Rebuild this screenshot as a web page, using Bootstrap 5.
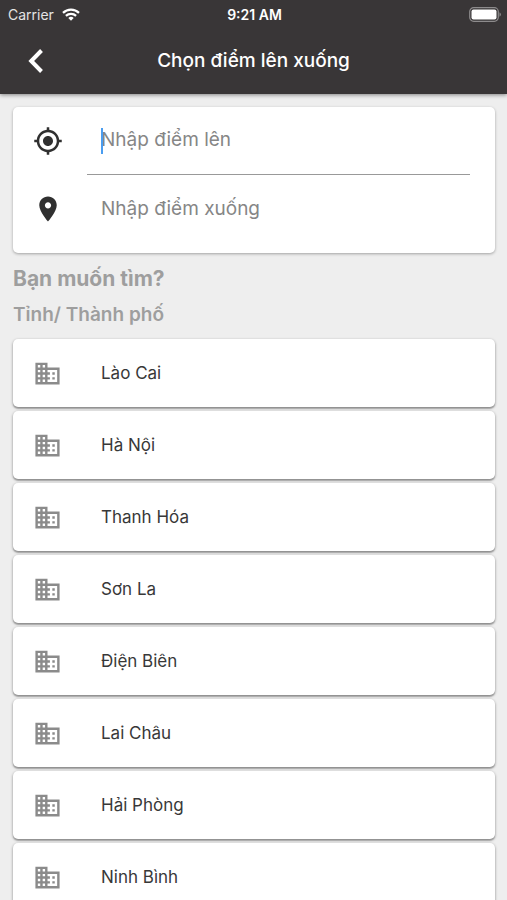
<!DOCTYPE html>
<html lang="vi">
<head>
<meta charset="utf-8">
<meta name="viewport" content="width=device-width, initial-scale=1">
<title>Chọn điểm lên xuống</title>
<link href="https://cdn.jsdelivr.net/npm/bootstrap@5.3.0/dist/css/bootstrap.min.css" rel="stylesheet">
<style>
body { font-family: Inter, "Liberation Sans", sans-serif; background: #eeeeee; color: #383838; }
.top-bar { background: #393637; box-shadow: 0 1px 4px rgba(0,0,0,.45); z-index: 1; }
.status-row { height: 28px; font-size: 14px; padding: 0 6px 0 8px; }
.status-row > * { flex: 1 1 0; }
.carrier { color: #e4e4e4; }
.clock { font-weight: 600; }
.title-row { height: 66px; padding: 0 16px; }
.title-row > .side { width: 40px; }
.page-title { font-size: 19px; font-weight: 500; }
.back-btn { width: 40px; height: 48px; }
.scroll-area { padding: 13px 12px 0 13px; scrollbar-width: none; }
.scroll-area::-webkit-scrollbar { display: none; }
.panel { border-radius: 5px; box-shadow: 0 1px 3px rgba(0,0,0,.32); }
.search-panel { height: 146px; padding: 0 25px 10px 0; }
.icon-col { width: 74px; padding-left: 20px; }
.field-col { padding-left: 14px; }
.field-col.first { border-bottom: 1px solid #999; }
.search-panel .form-control { font-size: 19px; background: transparent; box-shadow: none; color: #383838; }
.search-panel .form-control::placeholder { color: #868686; opacity: 1; }
.caret-bar { width: 2px; height: 26px; left: 14px; background: #4a9df0; }
.ask { font-size: 21px; font-weight: 700; line-height: 32px; margin: 10px 0 0; }
.group-name { font-size: 19px; font-weight: 600; line-height: 32px; margin: 4px 0 8px; }
.muted-head { color: #9e9e9e; }
.place { height: 68px; margin-bottom: 4px; font-size: 17px; color: #383838; box-shadow: 0 1px 3px rgba(0,0,0,.4), 0 2px 1px rgba(0,0,0,.16); }
.place .field-col { padding-top: 2px; }
.place svg { fill: #8b8b8b; }
</style>
<script src="https://cdn.jsdelivr.net/npm/bootstrap@5.3.0/dist/js/bootstrap.bundle.min.js"></script>
</head>
<body>
<svg class="d-none" aria-hidden="true">
  <symbol id="city" viewBox="0 0 24 24"><path d="M12 7V3H2v18h20V7H12zM6 19H4v-2h2v2zm0-4H4v-2h2v2zm0-4H4V9h2v2zm0-4H4V5h2v2zm4 12H8v-2h2v2zm0-4H8v-2h2v2zm0-4H8V9h2v2zm0-4H8V5h2v2zm10 12h-8v-2h2v-2h-2v-2h2v-2h-2V9h8v10zm-2-8h-2v2h2v-2zm0 4h-2v2h2v-2z"/></symbol>
</svg>
<div class="d-flex flex-column vh-100">
  <header class="top-bar text-white flex-shrink-0">
    <div class="status-row d-flex align-items-center">
      <div class="d-flex align-items-center gap-2">
        <span class="carrier">Carrier</span>
        <svg width="18" height="13" viewBox="0 0 18 13" fill="none" stroke="#fff" stroke-width="2.200" aria-hidden="true"><path d="M1 4.900a11.500 11.500 0 0 1 16 0M3.900 7.900a7.300 7.300 0 0 1 10.200 0"/><path d="M9 12.700 6.300 10a3.900 3.900 0 0 1 5.400 0z" fill="#fff" stroke="none"/></svg>
      </div>
      <div class="clock text-center">9:21 AM</div>
      <div class="d-flex justify-content-end">
        <svg width="32" height="15" viewBox="0 0 32 15" aria-hidden="true"><rect x=".7" y=".7" width="28.600" height="13.600" rx="4" fill="none" stroke="#8d8b8c" stroke-width="1.200"/><rect x="2.500" y="2.500" width="25" height="10" rx="2" fill="#fff"/><path d="M30.500 5.200q1.400.8 1.400 2.300t-1.400 2.300z" fill="#8d8b8c"/></svg>
      </div>
    </div>
    <div class="title-row d-flex align-items-center justify-content-between">
      <button type="button" class="back-btn btn p-0 border-0 d-flex align-items-center justify-content-center" aria-label="Quay lại">
        <svg width="16" height="26" viewBox="0 0 16 26" fill="none" stroke="#fff" stroke-width="4" aria-hidden="true"><path d="M13.500 2.500 3.200 13l10.300 10.500"/></svg>
      </button>
      <h1 class="page-title m-0">Chọn điểm lên xuống</h1>
      <div class="side"></div>
    </div>
  </header>

  <main class="scroll-area flex-grow-1 overflow-auto">
    <form class="panel search-panel bg-white d-flex flex-column">
      <div class="d-flex flex-fill">
        <label for="from" class="icon-col d-flex align-items-center" aria-label="Điểm lên">
          <svg width="30" height="30" viewBox="0 0 24 24" fill="#303030" aria-hidden="true"><path d="M12 8c-2.210 0-4 1.790-4 4s1.790 4 4 4 4-1.790 4-4-1.790-4-4-4zm8.940 3c-.46-4.170-3.770-7.480-7.940-7.940V1h-2v2.060C6.830 3.520 3.520 6.830 3.060 11H1v2h2.060c.46 4.170 3.770 7.480 7.940 7.940V23h2v-2.060c4.170-.46 7.480-3.770 7.940-7.940H23v-2h-2.060zM12 19c-3.870 0-7-3.130-7-7s3.130-7 7-7 7 3.130 7 7-3.130 7-7 7z"/></svg>
        </label>
        <div class="field-col first flex-fill position-relative d-flex align-items-center">
          <input id="from" type="text" class="form-control border-0 p-0" placeholder="Nhập điểm lên">
          <span class="caret-bar position-absolute"></span>
        </div>
      </div>
      <div class="d-flex flex-fill">
        <label for="to" class="icon-col d-flex align-items-center" aria-label="Điểm xuống">
          <svg width="30" height="30" viewBox="0 0 24 24" fill="#303030" aria-hidden="true"><path d="M12 2C8.130 2 5 5.130 5 9c0 5.250 7 13 7 13s7-7.750 7-13c0-3.870-3.130-7-7-7zm0 9.500c-1.380 0-2.500-1.120-2.500-2.500s1.120-2.500 2.500-2.500 2.500 1.120 2.500 2.500-1.120 2.500-2.500 2.500z"/></svg>
        </label>
        <div class="field-col flex-fill d-flex align-items-center">
          <input id="to" type="text" class="form-control border-0 p-0" placeholder="Nhập điểm xuống">
        </div>
      </div>
    </form>

    <h2 class="ask muted-head">Bạn muốn tìm?</h2>
    <h3 class="group-name muted-head">Tỉnh/ Thành phố</h3>

    <nav aria-label="Tỉnh/ Thành phố">
      <a href="#" class="panel place bg-white d-flex align-items-center text-decoration-none"><span class="icon-col d-flex"><svg width="29" height="29" aria-hidden="true"><use href="#city"/></svg></span><span class="field-col">Lào Cai</span></a>
      <a href="#" class="panel place bg-white d-flex align-items-center text-decoration-none"><span class="icon-col d-flex"><svg width="29" height="29" aria-hidden="true"><use href="#city"/></svg></span><span class="field-col">Hà Nội</span></a>
      <a href="#" class="panel place bg-white d-flex align-items-center text-decoration-none"><span class="icon-col d-flex"><svg width="29" height="29" aria-hidden="true"><use href="#city"/></svg></span><span class="field-col">Thanh Hóa</span></a>
      <a href="#" class="panel place bg-white d-flex align-items-center text-decoration-none"><span class="icon-col d-flex"><svg width="29" height="29" aria-hidden="true"><use href="#city"/></svg></span><span class="field-col">Sơn La</span></a>
      <a href="#" class="panel place bg-white d-flex align-items-center text-decoration-none"><span class="icon-col d-flex"><svg width="29" height="29" aria-hidden="true"><use href="#city"/></svg></span><span class="field-col">Điện Biên</span></a>
      <a href="#" class="panel place bg-white d-flex align-items-center text-decoration-none"><span class="icon-col d-flex"><svg width="29" height="29" aria-hidden="true"><use href="#city"/></svg></span><span class="field-col">Lai Châu</span></a>
      <a href="#" class="panel place bg-white d-flex align-items-center text-decoration-none"><span class="icon-col d-flex"><svg width="29" height="29" aria-hidden="true"><use href="#city"/></svg></span><span class="field-col">Hải Phòng</span></a>
      <a href="#" class="panel place bg-white d-flex align-items-center text-decoration-none"><span class="icon-col d-flex"><svg width="29" height="29" aria-hidden="true"><use href="#city"/></svg></span><span class="field-col">Ninh Bình</span></a>
    </nav>
  </main>
</div>
</body>
</html>
